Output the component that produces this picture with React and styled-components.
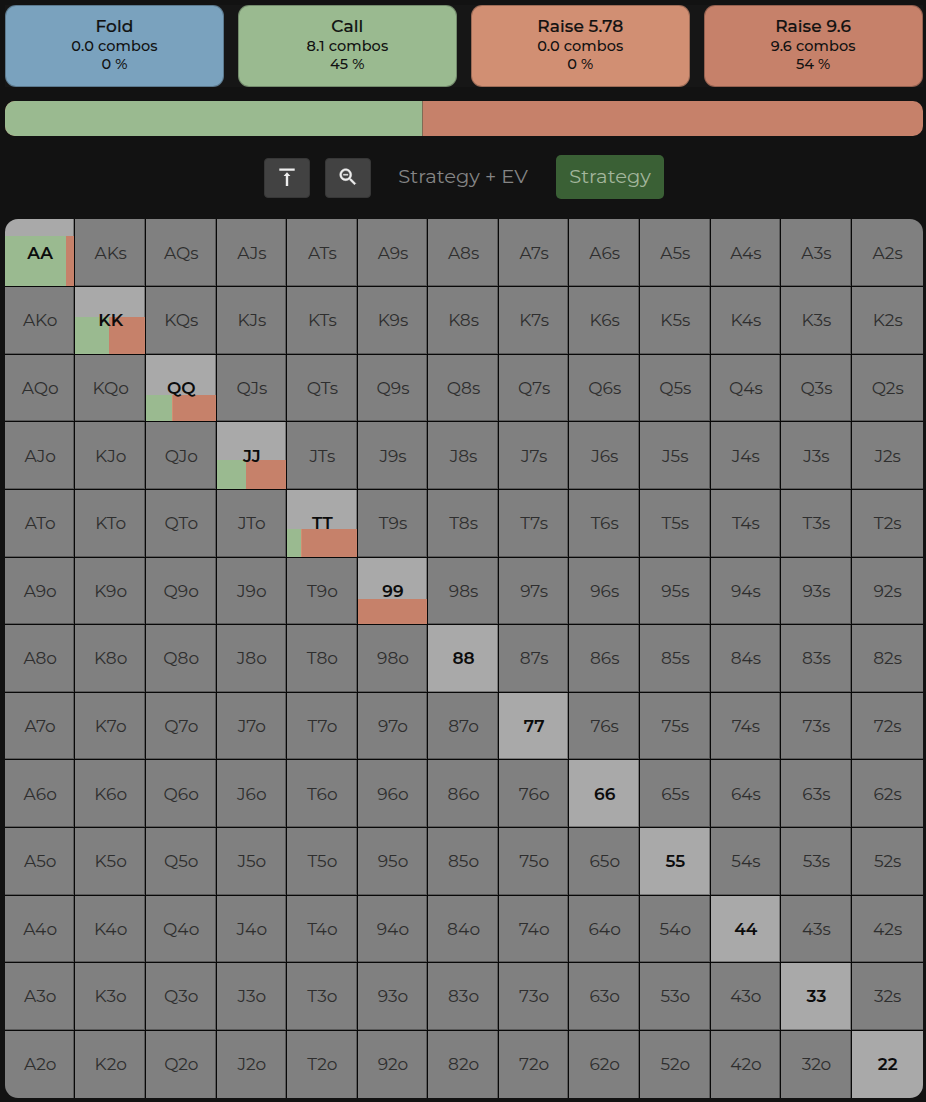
import React from "react";
import styled, { createGlobalStyle } from "styled-components";

const GlobalStyle = createGlobalStyle`
	* {
		box-sizing: border-box;
	}

	body {
		margin: 0;
		background: #121212;
		font-family: Montserrat, Inter, sans-serif;
	}
`

const colors = {
	fold: "#7aa2be",
	call: "#9aba90",
	raiseSmall: "#d18f73",
	raiseBig: "#c6816a",
};

const Page = styled.div`
	width: 926px;
	height: 1102px;
	padding: 5px 3.4px 0 5px;
	overflow: hidden;
`

const ActionRow = styled.div`
	display: grid;
	grid-template-columns: repeat(4, 1fr);
	column-gap: 14px;
	height: 82px;
	background: #161616;
`

const ActionCard = styled.div`
	display: flex;
	flex-direction: column;
	align-items: center;
	padding-top: 10px;
	border: 1px solid rgba(0, 0, 0, 0.25);
	border-radius: 11px;
	background: ${props => props.$color};
	color: #111;
`

const ActionName = styled.div`
	margin-bottom: 1px;
	font-size: 17px;
	font-weight: 500;
	line-height: 20px;
	letter-spacing: 0.1px;
	-webkit-text-stroke: 0.2px #111;
`

const ActionInfo = styled.div`
	font-size: 14.5px;
	font-weight: 500;
	line-height: 18px;
	letter-spacing: 0.1px;
`

const StrategyBar = styled.div`
	display: flex;
	height: 35px;
	margin-top: 14px;
	border-radius: 10px;
	overflow: hidden;
	background: ${colors.raiseBig};
`

const BarPart = styled.div`
	background: ${props => props.$color};
	border-right: 1px solid #806b54;
`

const Toolbar = styled.div`
	display: flex;
	height: 44px;
	margin: 19px 0 0 259px;
`

const IconButton = styled.button`
	display: flex;
	align-items: center;
	justify-content: center;
	width: 46px;
	height: 40px;
	margin: 3px 15px 0 0;
	padding: 0 0 2px;
	border: 1px solid #373737;
	border-radius: 4px;
	background: #424242;
	color: #eee;
`

const ModeButton = styled.button`
	height: 44px;
	width: ${props => props.$width}px;
	margin-left: ${props => props.$gap}px;
	padding: 0 0 3px;
	border: 0;
	border-radius: 5px;
	background: ${props => (props.$active ? "#3a6035" : "transparent")};
	color: ${props => (props.$active ? "#a3b69c" : "#858585")};
	font-family: inherit;
	font-size: 19.5px;
	white-space: nowrap;
`

const HandGrid = styled.div`
	display: grid;
	grid-template-columns: 70.4px repeat(11, 70.59px) 1fr;
	grid-template-rows: 67.8px repeat(11, 67.6px) 1fr;
	height: 878.6px;
	margin-top: 20.4px;
	border-radius: 13px;
	overflow: hidden;
`

const Cell = styled.div`
	display: grid;
	border: 0 solid #080808;
	border-right-width: ${props => (props.$lastCol ? 0 : 1)}px;
	border-bottom-width: ${props => (props.$lastRow ? 0 : 1)}px;
	box-shadow: inset ${props => (props.$lastCol ? 0 : -1)}px ${props => (props.$lastRow ? 0 : -1)}px rgba(0, 0, 0, 0.3);
	background: ${props => (props.$pair ? "#a9a9a9" : "#808080")};
`

const CellLabel = styled.span`
	grid-area: 1 / 1;
	place-self: center;
	z-index: 1;
	padding-left: 1px;
	font-size: 17px;
	line-height: 20px;
	font-weight: ${props => (props.$pair ? 600 : 400)};
	color: ${props => (props.$pair ? "#0c0c0c" : "#2e2e2e")};
`

const CellFill = styled.div`
	grid-area: 1 / 1;
	align-self: end;
	display: flex;
	height: ${props => props.$height}%;
	background: ${colors.raiseBig};
`

const CellCall = styled.div`
	width: ${props => props.$width}%;
	background: ${colors.call};
`

const CellRaise = styled.div`
	width: 1px;
	background: ${colors.raiseSmall};
`

const actions = [
	{ name: "Fold", combos: "0.0 combos", percent: "0 %", color: colors.fold },
	{ name: "Call", combos: "8.1 combos", percent: "45 %", color: colors.call },
	{ name: "Raise 5.78", combos: "0.0 combos", percent: "0 %", color: colors.raiseSmall },
	{ name: "Raise 9.6", combos: "9.6 combos", percent: "54 %", color: colors.raiseBig },
];

const ranks = "AKQJT98765432".split("");
const last = ranks.length - 1;

// height = share of the hand in range, call = share of that which calls
const fills = {
	AA: { height: 75.5, call: 88 },
	KK: { height: 56, call: 48 },
	QQ: { height: 39.5, call: 37.5, raise: true },
	JJ: { height: 43.5, call: 42 },
	TT: { height: 41.5, call: 20, raise: true },
	99: { height: 37.5, call: 0 },
};

const handName = (row, col) => {
	if (row === col) return ranks[row] + ranks[row];
	return row < col ? `${ranks[row]}${ranks[col]}s` : `${ranks[col]}${ranks[row]}o`;
};

const hands = ranks.flatMap((_, row) =>
	ranks.map((_, col) => ({ name: handName(row, col), row, col, pair: row === col }))
);

const TopIcon = () => (
	<svg width="24" height="24" viewBox="0 0 24 24" fill="currentColor">
		<path d="M4.3 3.6h15.4v2.2H4.3zM12 7.2l3.4 3.8h-2.2v10h-2.4V11H8.6z" />
	</svg>
);

const ZoomOutIcon = () => (
	<svg width="22" height="22" viewBox="0 0 24 24" fill="currentColor">
		<path d="M15.5 14h-.79l-.28-.27C15.41 12.59 16 11.11 16 9.5 16 5.91 13.09 3 9.5 3S3 5.91 3 9.5 5.91 16 9.5 16c1.61 0 3.09-.59 4.23-1.57l.27.28v.79l5 4.99L20.49 19l-4.99-5zm-6 0C7.01 14 5 11.99 5 9.5S7.01 5 9.5 5 14 7.01 14 9.5 11.99 14 9.5 14zM7 9h5v1H7z" stroke="currentColor" strokeWidth=".5" />
	</svg>
);

const App = () => (
	<Page>
		<GlobalStyle />
		<ActionRow>
			{actions.map(action => (
				<ActionCard key={action.name} $color={action.color}>
					<ActionName>{action.name}</ActionName>
					<ActionInfo>{action.combos}</ActionInfo>
					<ActionInfo>{action.percent}</ActionInfo>
				</ActionCard>
			))}
		</ActionRow>
		<StrategyBar>
			<BarPart $color={colors.call} style={{ width: "45.55%" }} />
		</StrategyBar>
		<Toolbar>
			<IconButton><TopIcon /></IconButton>
			<IconButton><ZoomOutIcon /></IconButton>
			<ModeButton $width={130} $gap={12}>Strategy + EV</ModeButton>
			<ModeButton $active $width={108} $gap={28}>Strategy</ModeButton>
		</Toolbar>
		<HandGrid>
			{hands.map(hand => (
				<Cell
					key={hand.name}
					$pair={hand.pair}
					$lastCol={hand.col === last}
					$lastRow={hand.row === last}
				>
					<CellLabel $pair={hand.pair}>{hand.name}</CellLabel>
					{fills[hand.name] && (
						<CellFill $height={fills[hand.name].height}>
							<CellCall $width={fills[hand.name].call} />
							{fills[hand.name].raise && <CellRaise />}
						</CellFill>
					)}
				</Cell>
			))}
		</HandGrid>
	</Page>
);

export default App;
